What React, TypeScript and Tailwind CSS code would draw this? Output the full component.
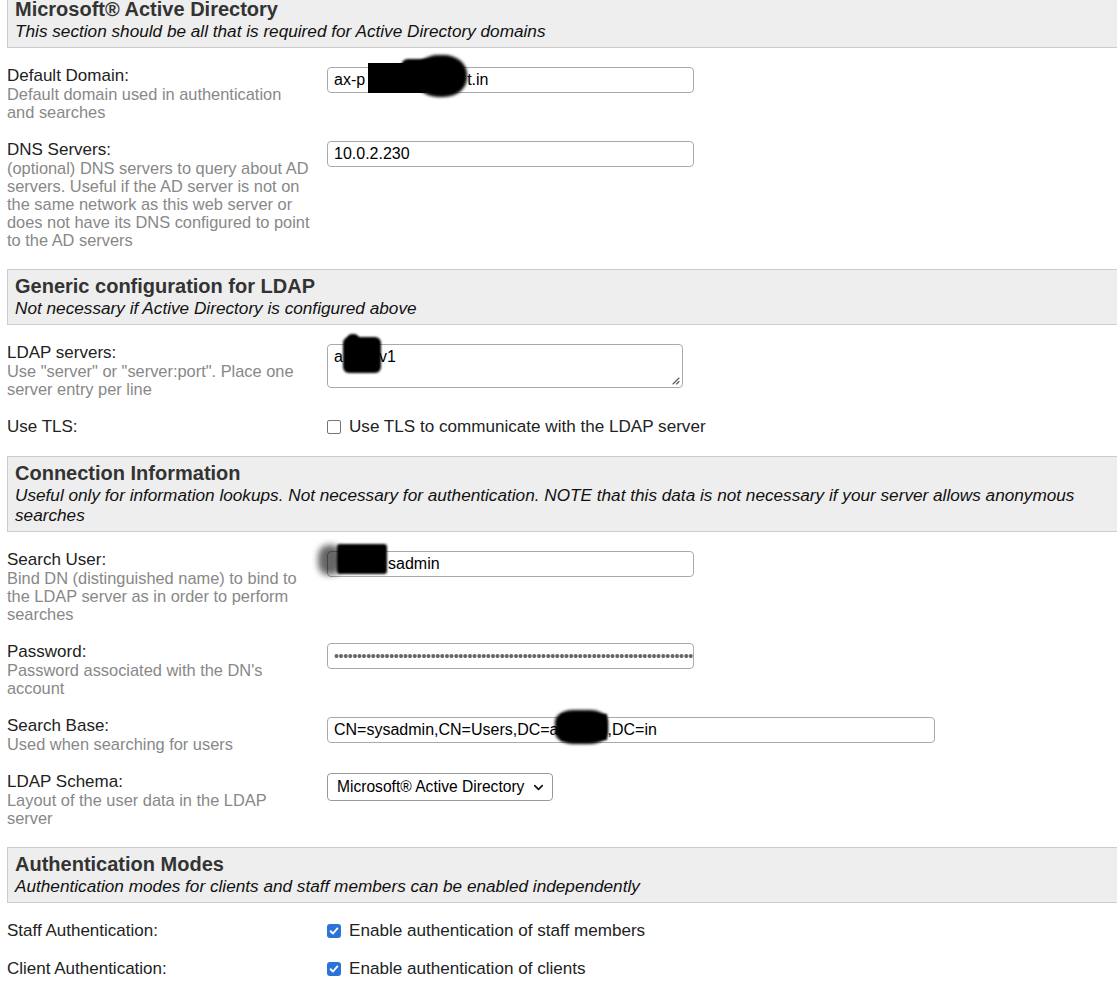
import { ChevronDown } from 'lucide-react';

const labelCls = "text-[17px] leading-[18px] text-[#222]";
const subCls = "text-[16.4px] leading-[18px] text-[#888]";

function Section({ title, subtitle, first }: { title: string; subtitle: string; first?: boolean }) {
    return (
        <div
            className={`${first ? '-mt-[8px]' : 'mt-[10px]'} mb-[9px] -mr-[20px] border border-[#ccc] bg-[#eee] px-[7px] pt-[5px] pb-[6px]`}
        >
            <div className="text-[20px] font-bold leading-[23px] text-[#333]">{title}</div>
            <div className="text-[17.2px] italic leading-[20px] text-[#111]">{subtitle}</div>
        </div>
    );
}

function Row({ label, sub, children }: { label: string; sub?: string; children: React.ReactNode }) {
    return (
        <div className="flex py-[10px]">
            <div className="w-[320px] shrink-0 pr-[16px]">
                <div className={labelCls}>{label}</div>
                {sub && <div className={subCls}>{sub}</div>}
            </div>
            <div>{children}</div>
        </div>
    );
}

// black marker scribble that hides part of a value
function Blot({ width, children }: { width: number; children: React.ReactNode }) {
    return (
        <span className="relative inline-block h-[18px] align-top" style={{ width }}>
            {children}
        </span>
    );
}

function TextBox({ width, children }: { width: string; children: React.ReactNode }) {
    return (
        <div
            className={`${width} h-[26px] rounded-[4px] border border-[#aaa] bg-white px-[6px] text-[16px] leading-[24px] text-black whitespace-nowrap`}
        >
            {children}
        </div>
    );
}

function Checkbox({ checked }: { checked?: boolean }) {
    if (checked) {
        return (
            <span className="flex h-[14px] w-[14px] items-center justify-center rounded-[3px] bg-[#2a73d9]">
                <svg width="10" height="10" viewBox="0 0 10 10" fill="none">
                    <path d="M1.6 5.2 4 7.5 8.4 2.4" stroke="white" strokeWidth="1.9" strokeLinecap="round" strokeLinejoin="round" />
                </svg>
            </span>
        );
    }
    return <span className="h-[14px] w-[14px] rounded-[2px] border border-[#767676] bg-white" />;
}

function CheckRow({ label, text, checked }: { label: string; text: string; checked?: boolean }) {
    return (
        <div className="flex py-[10px]">
            <div className={`w-[320px] shrink-0 ${labelCls}`}>{label}</div>
            <div className="flex h-[18px] items-center gap-[8px]">
                <Checkbox checked={checked} />
                <span className="text-[17.1px] leading-[18px] text-[#222]">{text}</span>
            </div>
        </div>
    );
}

export default function App() {
    return (
        <div
            className="w-full overflow-hidden bg-white pl-[7px]"
            style={{ fontFamily: '"Liberation Sans", Arial, sans-serif' }}
        >
            <Section
                first
                title="Microsoft® Active Directory"
                subtitle="This section should be all that is required for Active Directory domains"
            />
            <Row label="Default Domain:" sub="Default domain used in authentication and searches">
                <TextBox width="w-[367px]">
                    ax-p
                    <Blot width={102}>
                        <span className="absolute left-[3px] top-[-5px] h-[30px] w-[58px] bg-black" />
                        <span className="absolute left-[50px] top-[-13px] h-[42px] w-[52px] rounded-[45%] bg-black blur-[1.5px]" />
                        <span className="absolute left-[36px] top-[-9px] h-[14px] w-[34px] rounded-full bg-black blur-[1px]" />
                    </Blot>
                    t.in
                </TextBox>
            </Row>
            <Row
                label="DNS Servers:"
                sub="(optional) DNS servers to query about AD servers. Useful if the AD server is not on the same network as this web server or does not have its DNS configured to point to the AD servers"
            >
                <TextBox width="w-[367px]">10.0.2.230</TextBox>
            </Row>

            <Section title="Generic configuration for LDAP" subtitle="Not necessary if Active Directory is configured above" />
            <Row label="LDAP servers:" sub={'Use "server" or "server:port". Place one server entry per line'}>
                <div className="relative h-[44px] w-[356px] rounded-[4px] border border-[#aaa] bg-white px-[6px] pt-[3px] text-[16px] leading-[18px] text-black">
                    a
                    <Blot width={36}>
                        <span className="absolute left-[0px] top-[-11px] h-[36px] w-[38px] rounded-[6px] bg-black blur-[1.2px]" />
                        <span className="absolute left-[4px] top-[-14px] h-[10px] w-[12px] rounded-full bg-black blur-[1px]" />
                    </Blot>
                    v1
                    <svg className="absolute bottom-[2px] right-[2px]" width="9" height="9" viewBox="0 0 9 9">
                        <path d="M8 2 2 8M8 5.5 5.5 8" stroke="#555" strokeWidth="1.1" strokeLinecap="round" />
                    </svg>
                </div>
            </Row>
            <CheckRow label="Use TLS:" text="Use TLS to communicate with the LDAP server" />

            <Section
                title="Connection Information"
                subtitle="Useful only for information lookups. Not necessary for authentication. NOTE that this data is not necessary if your server allows anonymous searches"
            />
            <Row
                label="Search User:"
                sub="Bind DN (distinguished name) to bind to the LDAP server as in order to perform searches"
            >
                <TextBox width="w-[367px]">
                    <Blot width={54}>
                        <span className="absolute left-[-16px] top-[-7px] h-[30px] w-[24px] rounded-[40%] bg-black/60 blur-[3px]" />
                        <span className="absolute left-[3px] top-[-8px] h-[30px] w-[50px] rounded-[3px] bg-black blur-[1px]" />
                    </Blot>
                    sadmin
                </TextBox>
            </Row>
            <Row label="Password:" sub="Password associated with the DN's account">
                <div className="h-[26px] w-[367px] overflow-hidden rounded-[4px] border border-[#aaa] bg-white px-[6px] text-[14px] leading-[24px] tracking-[-0.3px] text-[#666] whitespace-nowrap">
                    {'•'.repeat(90)}
                </div>
            </Row>
            <Row label="Search Base:" sub="Used when searching for users">
                <TextBox width="w-[608px]">
                    CN=sysadmin,CN=Users,DC=a
                    <Blot width={49}>
                        <span className="absolute left-[-4px] top-[-8px] h-[34px] w-[53px] rounded-[35%] bg-black blur-[1.5px]" />
                        <span className="absolute left-[2px] top-[-4px] h-[26px] w-[46px] bg-black blur-[0.8px]" />
                    </Blot>
                    ,DC=in
                </TextBox>
            </Row>
            <Row label="LDAP Schema:" sub="Layout of the user data in the LDAP server">
                <div className="flex h-[28px] w-[226px] items-center justify-between rounded-[4px] border border-[#999] bg-white pl-[9px] pr-[6px] text-[15.6px] text-black">
                    <span>Microsoft® Active Directory</span>
                    <ChevronDown size={15} strokeWidth={2.6} color="#111" />
                </div>
            </Row>

            <Section
                title="Authentication Modes"
                subtitle="Authentication modes for clients and staff members can be enabled independently"
            />
            <CheckRow label="Staff Authentication:" text="Enable authentication of staff members" checked />
            <CheckRow label="Client Authentication:" text="Enable authentication of clients" checked />
        </div>
    );
}
